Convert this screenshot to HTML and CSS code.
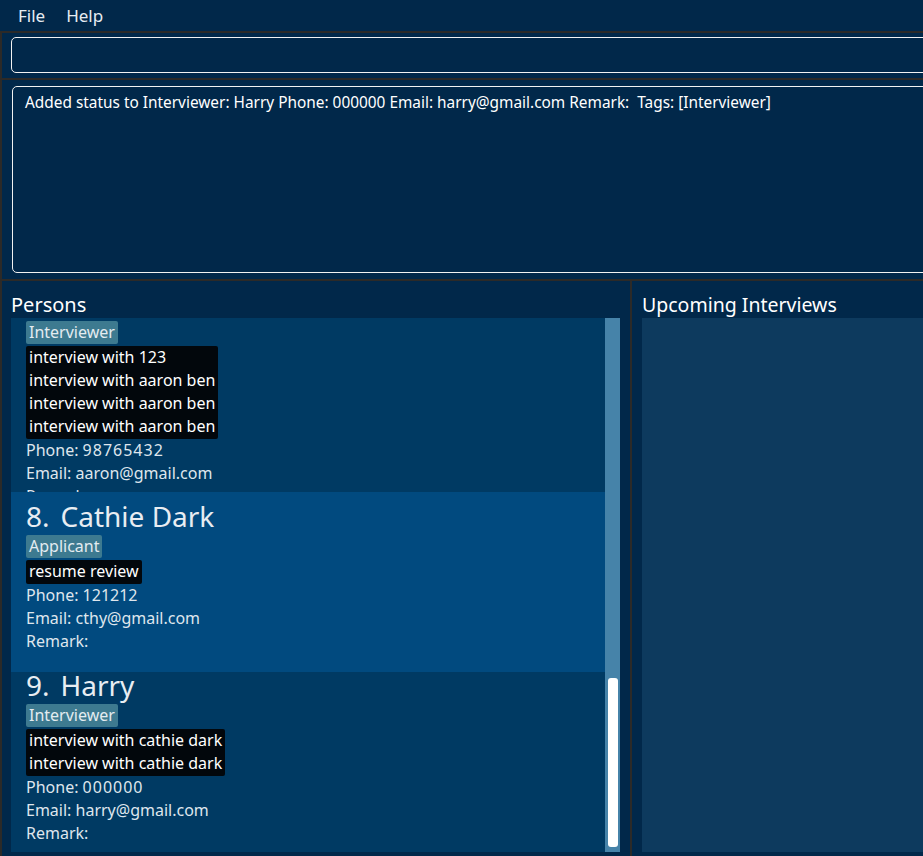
FILE: index.html
```html
<!DOCTYPE html>
<html>
<head>
<meta charset="utf-8">
<link rel="stylesheet" href="styles.css">
</head>
<body>
<div class="app">
  <div class="menubar">
    <span class="menu-item">File</span>
    <span class="menu-item">Help</span>
  </div>
  <div class="section command-section">
    <div class="command-box"></div>
  </div>
  <div class="section result-section">
    <div class="result-box">Added status to Interviewer: Harry Phone: 000000 Email: harry@gmail.com Remark:&nbsp; Tags: [Interviewer]</div>
  </div>
  <div class="main">
    <div class="panel persons">
      <div class="panel-title">Persons</div>
      <div class="list-wrap">
        <div class="list">
          <div class="cell cell-partial">
            <div class="cell-inner shifted">
              <div class="tag">Interviewer</div>
              <div class="notes">
                <div>interview with 123</div>
                <div>interview with aaron ben</div>
                <div>interview with aaron ben</div>
                <div>interview with aaron ben</div>
              </div>
              <div class="field">Phone: <span class="num">98765432</span></div>
              <div class="field">Email: aaron@gmail.com</div>
              <div class="field">Remark:</div>
            </div>
          </div>
          <div class="cell selected">
            <div class="cell-inner">
              <div class="name"><span class="idx">8.</span>Cathie Dark</div>
              <div class="tag">Applicant</div>
              <div class="notes">
                <div>resume review</div>
              </div>
              <div class="field">Phone: 121212</div>
              <div class="field">Email: cthy@gmail.com</div>
              <div class="field">Remark:</div>
            </div>
          </div>
          <div class="cell cell-last">
            <div class="cell-inner tight">
              <div class="name"><span class="idx">9.</span>Harry</div>
              <div class="tag">Interviewer</div>
              <div class="notes">
                <div>interview with cathie dark</div>
                <div>interview with cathie dark</div>
              </div>
              <div class="field">Phone: <span class="num">000000</span></div>
              <div class="field">Email: harry@gmail.com</div>
              <div class="field">Remark:</div>
            </div>
          </div>
        </div>
        <div class="scrollbar"><div class="thumb"></div></div>
      </div>
    </div>
    <div class="vsep"></div>
    <div class="panel interviews">
      <div class="panel-title narrow">Upcoming Interviews</div>
      <div class="interview-list"></div>
    </div>
  </div>
</div>
</body>
</html>
```

FILE: styles.css
```css
html, body {
  margin: 0;
  padding: 0;
  background: #01284a;
  overflow: hidden;
}
body {
  font-family: "Noto Sans", "Open Sans", sans-serif;
  color: #ffffff;
}
.app {
  width: 1000px;
  height: 856px;
  display: flex;
  flex-direction: column;
  background: #01284a;
}
.menubar {
  display: flex;
  align-items: center;
  padding-left: 18px;
  gap: 21px;
  font-size: 17px;
  color: #e6ecf2;
  border-bottom: 2px solid #2c2a28;
  box-sizing: border-box;
  height: 33px;
}
.section {
  border-left: 2px solid #2c2a28;
  border-bottom: 2px solid #2c2a28;
}
.command-section {
  height: 47px;
  box-sizing: border-box;
  padding: 4px 0 0 9px;
}
.command-box {
  height: 36px;
  box-sizing: border-box;
  border: 1px solid #f2f2f2;
  border-radius: 5px;
}
.result-section {
  height: 201px;
  box-sizing: border-box;
  padding: 6px 0 0 10px;
}
.result-box {
  height: 187px;
  box-sizing: border-box;
  border: 1px solid #f2f2f2;
  border-radius: 5px;
  padding: 5px 12px;
  font-size: 15.4px;
  line-height: 22px;
  color: #ffffff;
}
.main {
  flex: 1;
  display: flex;
  border-left: 2px solid #2c2a28;
}
.panel {
  display: flex;
  flex-direction: column;
}
.persons {
  width: 628px;
  padding-left: 9px;
  box-sizing: border-box;
}
.panel-title {
  height: 37px;
  box-sizing: border-box;
  padding-top: 12px;
  font-size: 20px;
  line-height: 24px;
  color: #ffffff;
}
.panel-title.narrow {
  font-size: 19.5px;
}
.list-wrap {
  display: flex;
  height: 534px;
  width: 609px;
}
.list {
  flex: 1;
  display: flex;
  flex-direction: column;
  overflow: hidden;
  background: #003a63;
}
.cell {
  height: 180px;
  flex-shrink: 0;
  background: #003a63;
  overflow: hidden;
}
.cell-partial {
  height: 174px;
}
.cell.selected {
  background: #014a7f;
}
.cell-inner {
  padding: 7px 0 0 15px;
}
.shifted {
  padding-top: 3px;
}
.tight {
  padding-top: 1px;
}
.name {
  font-size: 28px;
  line-height: 34px;
  color: #e8edf2;
  margin-bottom: 2px;
}
.tight .name {
  line-height: 24px;
  margin-bottom: 7px;
}
.idx {
  margin-right: 11px;
}
.tag {
  display: inline-block;
  background: #3d7a90;
  color: #e4ecf0;
  font-size: 16px;
  line-height: 23px;
  padding: 0 3px;
  border-radius: 2px;
  margin-bottom: 2px;
  vertical-align: top;
}
.notes {
  display: table;
  background: #02070c;
  color: #ffffff;
  font-size: 16px;
  line-height: 23px;
  padding: 0 3px 1px;
  border-radius: 2px;
}
.field {
  font-size: 16px;
  line-height: 23px;
  color: #dfe6ed;
}
.num {
  letter-spacing: 1px;
}
.scrollbar {
  width: 15px;
  background: #4683a9;
  position: relative;
}
.thumb {
  position: absolute;
  left: 3px;
  width: 10px;
  top: 360px;
  height: 169px;
  background: #ffffff;
  border-radius: 3px;
}
.vsep {
  width: 2px;
  background: #2c2a28;
}
.interviews {
  flex: 1;
  padding-left: 10px;
}
.interview-list {
  height: 534px;
  background: #0d3a5e;
}
```
